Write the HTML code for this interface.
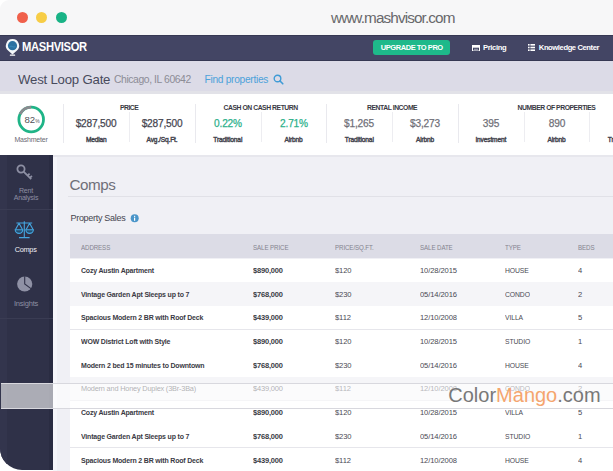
<!DOCTYPE html>
<html><head><meta charset="utf-8"><style>
html,body{margin:0;padding:0;}
body{width:613px;height:471px;position:relative;overflow:hidden;background:#ffffff;font-family:"Liberation Sans",sans-serif;}
</style></head><body>
<div style="position:absolute;left:0px;top:0px;width:613px;height:35px;background:#f7f7f8;border-top-left-radius:9px;"></div>
<div style="position:absolute;left:16.6px;top:11.6px;width:11.2px;height:11.2px;border-radius:50%;background:#f0604b"></div>
<div style="position:absolute;left:35.9px;top:11.6px;width:11.2px;height:11.2px;border-radius:50%;background:#f7cd46"></div>
<div style="position:absolute;left:55.8px;top:11.6px;width:11.2px;height:11.2px;border-radius:50%;background:#19b386"></div>
<div style="position:absolute;left:331px;top:9.75px;font-size:15.3px;line-height:15.3px;height:15.3px;font-weight:normal;color:#68686b;letter-spacing:-0.88px;white-space:nowrap;font-family:'Liberation Sans', sans-serif;">www.mashvisor.com</div>
<div style="position:absolute;left:0px;top:35px;width:613px;height:26px;background:#434564;"></div>
<div style="position:absolute;left:0px;top:35px;width:613px;height:1.2px;background:#363853;"></div>
<div style="position:absolute;left:0px;top:59.6px;width:613px;height:1.4px;background:#363853;"></div>
<svg style="position:absolute;left:0;top:35px" width="22" height="25" viewBox="0 35 22 25">
<path d="M12.5 39.1a6.6 6.6 0 0 0-4.2 11.7l4.2 3.7l4.2-3.7a6.6 6.6 0 0 0-4.2-11.7z" fill="#f4f8fa"/>
<circle cx="12.5" cy="45.7" r="4.6" fill="#2b72a2"/>
<path d="M9.6 46.6q1.5-1 2.9 0t2.9 0" stroke="#3d8fbf" stroke-width="0.8" fill="none"/>
<rect x="9.8" y="54.4" width="5.4" height="1.4" rx="0.6" fill="#fff"/>
</svg>
<div style="position:absolute;left:22.4px;top:40.17px;font-size:13.5px;line-height:13.5px;height:13.5px;font-weight:bold;color:#fff;letter-spacing:-0.4px;white-space:nowrap;font-family:'Liberation Sans', sans-serif;transform:scaleX(0.83);transform-origin:left 0;">MASHVISOR</div>
<div style="position:absolute;left:373px;top:40px;width:77px;height:15px;border-radius:3px;background:#1eb98a"></div>
<div style="position:absolute;left:211.8px;width:400px;top:44.15px;font-size:7.5px;line-height:7.5px;height:7.5px;font-weight:bold;color:#fff;letter-spacing:-0.45px;white-space:nowrap;font-family:'Liberation Sans', sans-serif;text-align:center;">UPGRADE TO PRO</div>
<svg style="position:absolute;left:472px;top:44.5px" width="8" height="6.5" viewBox="0 0 8 6.5">
<rect x="0.5" y="0.5" width="7" height="5.5" fill="none" stroke="#fff" stroke-width="1"/>
<rect x="0.5" y="0.5" width="7" height="2.2" fill="#fff"/>
<rect x="2" y="3.8" width="4" height="0.9" fill="#fff" fill-opacity="0.6"/>
</svg>
<div style="position:absolute;left:483px;top:43.87px;font-size:7.6px;line-height:7.6px;height:7.6px;font-weight:bold;color:#fff;letter-spacing:-0.35px;white-space:nowrap;font-family:'Liberation Sans', sans-serif;">Pricing</div>
<svg style="position:absolute;left:528px;top:44px" width="7" height="7" viewBox="0 0 7 7" fill="#fff">
<rect x="0" y="0" width="1.6" height="1.6"/><rect x="2.4" y="0" width="4.6" height="1.6"/>
<rect x="0" y="2.7" width="1.6" height="1.6"/><rect x="2.4" y="2.7" width="4.6" height="1.6"/>
<rect x="0" y="5.4" width="1.6" height="1.6"/><rect x="2.4" y="5.4" width="4.6" height="1.6"/>
</svg>
<div style="position:absolute;left:538.8px;top:43.87px;font-size:7.6px;line-height:7.6px;height:7.6px;font-weight:bold;color:#fff;letter-spacing:-0.4px;white-space:nowrap;font-family:'Liberation Sans', sans-serif;">Knowledge Center</div>
<div style="position:absolute;left:0px;top:61px;width:613px;height:30.2px;background:#dcdbe7;"></div>
<div style="position:absolute;left:0px;top:91.2px;width:613px;height:2.5px;background:#e2e2e8;"></div>
<div style="position:absolute;left:18px;top:72.83px;font-size:13.2px;line-height:13.2px;height:13.2px;font-weight:normal;color:#474a5c;letter-spacing:-0.2px;white-space:nowrap;font-family:'Liberation Sans', sans-serif;">West Loop Gate</div>
<div style="position:absolute;left:114px;top:75.20px;font-size:10.4px;line-height:10.4px;height:10.4px;font-weight:normal;color:#8c8c96;letter-spacing:-0.42px;white-space:nowrap;font-family:'Liberation Sans', sans-serif;">Chicago, IL 60642</div>
<div style="position:absolute;left:204.6px;top:75.37px;font-size:10.2px;line-height:10.2px;height:10.2px;font-weight:normal;color:#4ca2da;letter-spacing:-0.3px;white-space:nowrap;font-family:'Liberation Sans', sans-serif;">Find properties</div>
<svg style="position:absolute;left:273px;top:74px" width="11" height="11" viewBox="0 0 11 11">
<circle cx="4.5" cy="4.5" r="3.3" fill="none" stroke="#3f9bd6" stroke-width="1.4"/>
<path d="M7 7l2.8 2.8" stroke="#3f9bd6" stroke-width="1.6" stroke-linecap="round"/>
</svg>
<div style="position:absolute;left:0px;top:93.7px;width:613px;height:61.6px;background:#ffffff;"></div>
<svg style="position:absolute;left:16px;top:104px" width="31" height="31" viewBox="0 0 31 31">
<circle cx="15.2" cy="15.5" r="12.3" fill="none" stroke="#1fb487" stroke-width="2.8"/>
<path d="M15.2 3.2 A12.3 12.3 0 0 0 4.1 10.2" fill="none" stroke="#8a8a8f" stroke-width="2.8"/>
</svg>
<div style="position:absolute;left:24.6px;top:115.47px;font-size:9.6px;line-height:9.6px;height:9.6px;font-weight:normal;color:#4f4f56;letter-spacing:-0.3px;white-space:nowrap;font-family:'Liberation Sans', sans-serif;">82</div>
<div style="position:absolute;left:35.2px;top:119.37px;font-size:5px;line-height:5px;height:5px;font-weight:normal;color:#55555c;letter-spacing:0px;white-space:nowrap;font-family:'Liberation Sans', sans-serif;">%</div>
<div style="position:absolute;left:-169px;width:400px;top:135.67px;font-size:7px;line-height:7px;height:7px;font-weight:normal;color:#6b6b74;letter-spacing:-0.2px;white-space:nowrap;font-family:'Liberation Sans', sans-serif;text-align:center;">Mashmeter</div>
<div style="position:absolute;left:63.4px;top:103.7px;width:1px;height:39px;background:#e9e9ee;"></div>
<div style="position:absolute;left:129.2px;top:112px;width:1px;height:30px;background:#ededf1;"></div>
<div style="position:absolute;left:194.9px;top:103.7px;width:1px;height:39px;background:#e9e9ee;"></div>
<div style="position:absolute;left:260.6px;top:112px;width:1px;height:30px;background:#ededf1;"></div>
<div style="position:absolute;left:326.4px;top:103.7px;width:1px;height:39px;background:#e9e9ee;"></div>
<div style="position:absolute;left:392.1px;top:112px;width:1px;height:30px;background:#ededf1;"></div>
<div style="position:absolute;left:457.9px;top:103.7px;width:1px;height:39px;background:#e9e9ee;"></div>
<div style="position:absolute;left:523.6px;top:112px;width:1px;height:30px;background:#ededf1;"></div>
<div style="position:absolute;left:589.4px;top:112px;width:1px;height:30px;background:#ededf1;"></div>
<div style="position:absolute;left:-70.85px;width:400px;top:104.74px;font-size:6.8px;line-height:6.8px;height:6.8px;font-weight:bold;color:#3a3a44;letter-spacing:-0.45px;white-space:nowrap;font-family:'Liberation Sans', sans-serif;text-align:center;">PRICE</div>
<div style="position:absolute;left:60.64999999999998px;width:400px;top:104.74px;font-size:6.8px;line-height:6.8px;height:6.8px;font-weight:bold;color:#3a3a44;letter-spacing:-0.45px;white-space:nowrap;font-family:'Liberation Sans', sans-serif;text-align:center;">CASH ON CASH RETURN</div>
<div style="position:absolute;left:192.14999999999998px;width:400px;top:104.74px;font-size:6.8px;line-height:6.8px;height:6.8px;font-weight:bold;color:#3a3a44;letter-spacing:-0.45px;white-space:nowrap;font-family:'Liberation Sans', sans-serif;text-align:center;">RENTAL INCOME</div>
<div style="position:absolute;left:356.525px;width:400px;top:104.74px;font-size:6.8px;line-height:6.8px;height:6.8px;font-weight:bold;color:#3a3a44;letter-spacing:-0.45px;white-space:nowrap;font-family:'Liberation Sans', sans-serif;text-align:center;">NUMBER OF PROPERTIES</div>
<div style="position:absolute;left:-103.725px;width:400px;top:118.39px;font-size:11px;line-height:11px;height:11px;font-weight:normal;color:#45454f;letter-spacing:-0.2px;white-space:nowrap;font-family:'Liberation Sans', sans-serif;text-align:center;transform:scaleX(0.92);transform-origin:center 0;-webkit-text-stroke:0.25px #45454f;">$287,500</div>
<div style="position:absolute;left:-103.725px;width:400px;top:136.51px;font-size:6.6px;line-height:6.6px;height:6.6px;font-weight:normal;color:#44444e;letter-spacing:-0.15px;white-space:nowrap;font-family:'Liberation Sans', sans-serif;text-align:center;-webkit-text-stroke:0.4px #44444e;">Median</div>
<div style="position:absolute;left:-37.974999999999994px;width:400px;top:118.39px;font-size:11px;line-height:11px;height:11px;font-weight:normal;color:#45454f;letter-spacing:-0.2px;white-space:nowrap;font-family:'Liberation Sans', sans-serif;text-align:center;transform:scaleX(0.92);transform-origin:center 0;-webkit-text-stroke:0.25px #45454f;">$287,500</div>
<div style="position:absolute;left:-37.974999999999994px;width:400px;top:136.51px;font-size:6.6px;line-height:6.6px;height:6.6px;font-weight:normal;color:#44444e;letter-spacing:-0.15px;white-space:nowrap;font-family:'Liberation Sans', sans-serif;text-align:center;-webkit-text-stroke:0.4px #44444e;">Avg./Sq.Ft.</div>
<div style="position:absolute;left:27.775000000000006px;width:400px;top:118.39px;font-size:11px;line-height:11px;height:11px;font-weight:normal;color:#2bb08a;letter-spacing:-0.2px;white-space:nowrap;font-family:'Liberation Sans', sans-serif;text-align:center;transform:scaleX(0.92);transform-origin:center 0;-webkit-text-stroke:0.25px #2bb08a;">0.22%</div>
<div style="position:absolute;left:27.775000000000006px;width:400px;top:136.51px;font-size:6.6px;line-height:6.6px;height:6.6px;font-weight:normal;color:#44444e;letter-spacing:-0.15px;white-space:nowrap;font-family:'Liberation Sans', sans-serif;text-align:center;-webkit-text-stroke:0.4px #44444e;">Traditional</div>
<div style="position:absolute;left:93.52499999999998px;width:400px;top:118.39px;font-size:11px;line-height:11px;height:11px;font-weight:normal;color:#2bb08a;letter-spacing:-0.2px;white-space:nowrap;font-family:'Liberation Sans', sans-serif;text-align:center;transform:scaleX(0.92);transform-origin:center 0;-webkit-text-stroke:0.25px #2bb08a;">2.71%</div>
<div style="position:absolute;left:93.52499999999998px;width:400px;top:136.51px;font-size:6.6px;line-height:6.6px;height:6.6px;font-weight:normal;color:#44444e;letter-spacing:-0.15px;white-space:nowrap;font-family:'Liberation Sans', sans-serif;text-align:center;-webkit-text-stroke:0.4px #44444e;">Airbnb</div>
<div style="position:absolute;left:159.27499999999998px;width:400px;top:118.39px;font-size:11px;line-height:11px;height:11px;font-weight:normal;color:#6f6f78;letter-spacing:-0.2px;white-space:nowrap;font-family:'Liberation Sans', sans-serif;text-align:center;transform:scaleX(0.92);transform-origin:center 0;-webkit-text-stroke:0.25px #6f6f78;">$1,265</div>
<div style="position:absolute;left:159.27499999999998px;width:400px;top:136.51px;font-size:6.6px;line-height:6.6px;height:6.6px;font-weight:normal;color:#44444e;letter-spacing:-0.15px;white-space:nowrap;font-family:'Liberation Sans', sans-serif;text-align:center;-webkit-text-stroke:0.4px #44444e;">Traditional</div>
<div style="position:absolute;left:225.02499999999998px;width:400px;top:118.39px;font-size:11px;line-height:11px;height:11px;font-weight:normal;color:#6f6f78;letter-spacing:-0.2px;white-space:nowrap;font-family:'Liberation Sans', sans-serif;text-align:center;transform:scaleX(0.92);transform-origin:center 0;-webkit-text-stroke:0.25px #6f6f78;">$3,273</div>
<div style="position:absolute;left:225.02499999999998px;width:400px;top:136.51px;font-size:6.6px;line-height:6.6px;height:6.6px;font-weight:normal;color:#44444e;letter-spacing:-0.15px;white-space:nowrap;font-family:'Liberation Sans', sans-serif;text-align:center;-webkit-text-stroke:0.4px #44444e;">Airbnb</div>
<div style="position:absolute;left:290.775px;width:400px;top:118.39px;font-size:11px;line-height:11px;height:11px;font-weight:normal;color:#6f6f78;letter-spacing:-0.2px;white-space:nowrap;font-family:'Liberation Sans', sans-serif;text-align:center;transform:scaleX(0.92);transform-origin:center 0;-webkit-text-stroke:0.25px #6f6f78;">395</div>
<div style="position:absolute;left:290.775px;width:400px;top:136.51px;font-size:6.6px;line-height:6.6px;height:6.6px;font-weight:normal;color:#44444e;letter-spacing:-0.15px;white-space:nowrap;font-family:'Liberation Sans', sans-serif;text-align:center;-webkit-text-stroke:0.4px #44444e;">Investment</div>
<div style="position:absolute;left:356.525px;width:400px;top:118.39px;font-size:11px;line-height:11px;height:11px;font-weight:normal;color:#6f6f78;letter-spacing:-0.2px;white-space:nowrap;font-family:'Liberation Sans', sans-serif;text-align:center;transform:scaleX(0.92);transform-origin:center 0;-webkit-text-stroke:0.25px #6f6f78;">890</div>
<div style="position:absolute;left:356.525px;width:400px;top:136.51px;font-size:6.6px;line-height:6.6px;height:6.6px;font-weight:normal;color:#44444e;letter-spacing:-0.15px;white-space:nowrap;font-family:'Liberation Sans', sans-serif;text-align:center;-webkit-text-stroke:0.4px #44444e;">Airbnb</div>
<div style="position:absolute;left:422.275px;width:400px;top:136.51px;font-size:6.6px;line-height:6.6px;height:6.6px;font-weight:normal;color:#44444e;letter-spacing:-0.15px;white-space:nowrap;font-family:'Liberation Sans', sans-serif;text-align:center;-webkit-text-stroke:0.4px #44444e;">Traditional</div>
<div style="position:absolute;left:53px;top:155.3px;width:560px;height:315.7px;background:#f0f0f5;"></div>
<div style="position:absolute;left:53px;top:155.3px;width:560px;height:1.8px;background:#e7e7ed;"></div>
<div style="position:absolute;left:53px;top:157px;width:3.5px;height:314px;background:#f6f6fa;"></div>
<div style="position:absolute;left:0;top:155.3px;width:52.7px;height:314.7px;background:#2f3148;border-bottom-left-radius:22px;overflow:hidden"><div style="position:absolute;left:0;top:0;width:6.5px;height:100%;background:#33354d"></div><div style="position:absolute;left:49.3px;top:0;width:3.4px;height:100%;background:#2a2c42"></div></div>
<div style="position:absolute;left:0px;top:209.2px;width:52.7px;height:1px;background:#3a3c53;"></div>
<div style="position:absolute;left:0px;top:318px;width:52.7px;height:1px;background:#3a3c53;"></div>
<svg style="position:absolute;left:14px;top:162px" width="22" height="22" viewBox="0 0 22 22">
<circle cx="7" cy="7" r="3.6" fill="none" stroke="#8d8fa3" stroke-width="1.8"/>
<path d="M9.6 9.6l7.6 7.6M13.6 13.6l2-2M15.9 15.9l2-2" stroke="#8d8fa3" stroke-width="1.8"/>
</svg>
<div style="position:absolute;left:-174px;width:400px;top:186.57px;font-size:7px;line-height:7px;height:7px;font-weight:normal;color:#8d8fa3;letter-spacing:-0.2px;white-space:nowrap;font-family:'Liberation Sans', sans-serif;text-align:center;">Rent</div>
<div style="position:absolute;left:-174px;width:400px;top:193.57px;font-size:7px;line-height:7px;height:7px;font-weight:normal;color:#8d8fa3;letter-spacing:-0.2px;white-space:nowrap;font-family:'Liberation Sans', sans-serif;text-align:center;">Analysis</div>
<svg style="position:absolute;left:14px;top:220px" width="22" height="21" viewBox="0 0 22 21" fill="none" stroke="#45a6e0" stroke-width="1.1">
<path d="M10.3 1.2v16.3M5 17.6h10.6M2.4 3h15.8"/>
<path d="M5 3.2l-3.6 6.6M5 3.2l3.6 6.6M15.6 3.2l-3.6 6.6M15.6 3.2l3.6 6.6"/>
<path d="M1.2 9.8h7.6a3.8 3.6 0 0 1-7.6 0z M11.8 9.8h7.6a3.8 3.6 0 0 1-7.6 0z" fill="#234e70"/>
</svg>
<div style="position:absolute;left:-174.4px;width:400px;top:245.62px;font-size:7.3px;line-height:7.3px;height:7.3px;font-weight:normal;color:#f2f2f6;letter-spacing:-0.25px;white-space:nowrap;font-family:'Liberation Sans', sans-serif;text-align:center;">Comps</div>
<svg style="position:absolute;left:14px;top:274px" width="22" height="20" viewBox="0 0 22 20">
<circle cx="10.7" cy="10" r="7.6" fill="#8f91a5"/>
<path d="M10.7 2.2V10L17 14.6" fill="none" stroke="#2f3148" stroke-width="1.1"/>
</svg>
<div style="position:absolute;left:-174px;width:400px;top:299.65px;font-size:7.5px;line-height:7.5px;height:7.5px;font-weight:normal;color:#8d8fa3;letter-spacing:-0.2px;white-space:nowrap;font-family:'Liberation Sans', sans-serif;text-align:center;">Insights</div>
<div style="position:absolute;left:69.6px;top:176.93px;font-size:15.2px;line-height:15.2px;height:15.2px;font-weight:normal;color:#6f6f79;letter-spacing:-0.45px;white-space:nowrap;font-family:'Liberation Sans', sans-serif;">Comps</div>
<div style="position:absolute;left:67.5px;top:195.6px;width:545.5px;height:1.8px;background:#e1e1e7;"></div>
<div style="position:absolute;left:70.5px;top:213.68px;font-size:9px;line-height:9px;height:9px;font-weight:normal;color:#45454f;letter-spacing:-0.3px;white-space:nowrap;font-family:'Liberation Sans', sans-serif;">Property Sales</div>
<svg style="position:absolute;left:130px;top:214px" width="9" height="9" viewBox="0 0 9 9">
<circle cx="4.7" cy="4.3" r="4" fill="#4a95c9"/>
<rect x="4" y="3.6" width="1.2" height="3.2" fill="#fff"/><rect x="4" y="1.8" width="1.2" height="1.1" fill="#fff"/>
</svg>
<div style="position:absolute;left:69.6px;top:233.7px;width:543.4px;height:24.4px;background:#dcdce6;"></div>
<div style="position:absolute;left:81px;top:243.87px;font-size:7px;line-height:7px;height:7px;font-weight:normal;color:#84848f;letter-spacing:-0.1px;white-space:nowrap;font-family:'Liberation Sans', sans-serif;transform:scaleX(0.88);transform-origin:left 0;">ADDRESS</div>
<div style="position:absolute;left:253px;top:243.87px;font-size:7px;line-height:7px;height:7px;font-weight:normal;color:#84848f;letter-spacing:-0.1px;white-space:nowrap;font-family:'Liberation Sans', sans-serif;transform:scaleX(0.88);transform-origin:left 0;">SALE PRICE</div>
<div style="position:absolute;left:334.5px;top:243.87px;font-size:7px;line-height:7px;height:7px;font-weight:normal;color:#84848f;letter-spacing:-0.1px;white-space:nowrap;font-family:'Liberation Sans', sans-serif;transform:scaleX(0.88);transform-origin:left 0;">PRICE/SQ.FT.</div>
<div style="position:absolute;left:420px;top:243.87px;font-size:7px;line-height:7px;height:7px;font-weight:normal;color:#84848f;letter-spacing:-0.1px;white-space:nowrap;font-family:'Liberation Sans', sans-serif;transform:scaleX(0.88);transform-origin:left 0;">SALE DATE</div>
<div style="position:absolute;left:505px;top:243.87px;font-size:7px;line-height:7px;height:7px;font-weight:normal;color:#84848f;letter-spacing:-0.1px;white-space:nowrap;font-family:'Liberation Sans', sans-serif;transform:scaleX(0.88);transform-origin:left 0;">TYPE</div>
<div style="position:absolute;left:578px;top:243.87px;font-size:7px;line-height:7px;height:7px;font-weight:normal;color:#84848f;letter-spacing:-0.1px;white-space:nowrap;font-family:'Liberation Sans', sans-serif;transform:scaleX(0.88);transform-origin:left 0;">BEDS</div>
<div style="position:absolute;left:69.6px;top:258.5px;width:543.4px;height:23.7px;background:#ffffff;"></div>
<div style="position:absolute;left:81px;top:266.91px;font-size:7.9px;line-height:7.9px;height:7.9px;font-weight:bold;color:#3a3a44;letter-spacing:-0.2px;white-space:nowrap;font-family:'Liberation Sans', sans-serif;transform:scaleX(0.885);transform-origin:left 0;">Cozy Austin Apartment</div>
<div style="position:absolute;left:253px;top:266.91px;font-size:7.9px;line-height:7.9px;height:7.9px;font-weight:bold;color:#3a3a44;letter-spacing:-0.2px;white-space:nowrap;font-family:'Liberation Sans', sans-serif;transform:scaleX(0.95);transform-origin:left 0;">$890,000</div>
<div style="position:absolute;left:334.5px;top:266.91px;font-size:7.9px;line-height:7.9px;height:7.9px;font-weight:normal;color:#4a4a54;letter-spacing:-0.1px;white-space:nowrap;font-family:'Liberation Sans', sans-serif;transform:scaleX(0.96);transform-origin:left 0;">$120</div>
<div style="position:absolute;left:420px;top:266.91px;font-size:7.9px;line-height:7.9px;height:7.9px;font-weight:normal;color:#4a4a54;letter-spacing:-0.1px;white-space:nowrap;font-family:'Liberation Sans', sans-serif;transform:scaleX(0.96);transform-origin:left 0;">10/28/2015</div>
<div style="position:absolute;left:505px;top:266.91px;font-size:7.9px;line-height:7.9px;height:7.9px;font-weight:normal;color:#4a4a54;letter-spacing:-0.1px;white-space:nowrap;font-family:'Liberation Sans', sans-serif;transform:scaleX(0.86);transform-origin:left 0;">HOUSE</div>
<div style="position:absolute;left:578px;top:266.91px;font-size:7.9px;line-height:7.9px;height:7.9px;font-weight:normal;color:#4a4a54;letter-spacing:-0.1px;white-space:nowrap;font-family:'Liberation Sans', sans-serif;transform:scaleX(0.96);transform-origin:left 0;">4</div>
<div style="position:absolute;left:69.6px;top:282.2px;width:543.4px;height:23.7px;background:#f5f5f8;"></div>
<div style="position:absolute;left:81px;top:290.61px;font-size:7.9px;line-height:7.9px;height:7.9px;font-weight:bold;color:#3a3a44;letter-spacing:-0.2px;white-space:nowrap;font-family:'Liberation Sans', sans-serif;transform:scaleX(0.885);transform-origin:left 0;">Vintage Garden Apt Sleeps up to 7</div>
<div style="position:absolute;left:253px;top:290.61px;font-size:7.9px;line-height:7.9px;height:7.9px;font-weight:bold;color:#3a3a44;letter-spacing:-0.2px;white-space:nowrap;font-family:'Liberation Sans', sans-serif;transform:scaleX(0.95);transform-origin:left 0;">$768,000</div>
<div style="position:absolute;left:334.5px;top:290.61px;font-size:7.9px;line-height:7.9px;height:7.9px;font-weight:normal;color:#4a4a54;letter-spacing:-0.1px;white-space:nowrap;font-family:'Liberation Sans', sans-serif;transform:scaleX(0.96);transform-origin:left 0;">$230</div>
<div style="position:absolute;left:420px;top:290.61px;font-size:7.9px;line-height:7.9px;height:7.9px;font-weight:normal;color:#4a4a54;letter-spacing:-0.1px;white-space:nowrap;font-family:'Liberation Sans', sans-serif;transform:scaleX(0.96);transform-origin:left 0;">05/14/2016</div>
<div style="position:absolute;left:505px;top:290.61px;font-size:7.9px;line-height:7.9px;height:7.9px;font-weight:normal;color:#4a4a54;letter-spacing:-0.1px;white-space:nowrap;font-family:'Liberation Sans', sans-serif;transform:scaleX(0.86);transform-origin:left 0;">CONDO</div>
<div style="position:absolute;left:578px;top:290.61px;font-size:7.9px;line-height:7.9px;height:7.9px;font-weight:normal;color:#4a4a54;letter-spacing:-0.1px;white-space:nowrap;font-family:'Liberation Sans', sans-serif;transform:scaleX(0.96);transform-origin:left 0;">2</div>
<div style="position:absolute;left:69.6px;top:305.9px;width:543.4px;height:23.7px;background:#ffffff;"></div>
<div style="position:absolute;left:69.6px;top:328.8px;width:543.4px;height:1px;background:#e6e6eb;"></div>
<div style="position:absolute;left:81px;top:314.31px;font-size:7.9px;line-height:7.9px;height:7.9px;font-weight:bold;color:#3a3a44;letter-spacing:-0.2px;white-space:nowrap;font-family:'Liberation Sans', sans-serif;transform:scaleX(0.885);transform-origin:left 0;">Spacious Modern 2 BR with Roof Deck</div>
<div style="position:absolute;left:253px;top:314.31px;font-size:7.9px;line-height:7.9px;height:7.9px;font-weight:bold;color:#3a3a44;letter-spacing:-0.2px;white-space:nowrap;font-family:'Liberation Sans', sans-serif;transform:scaleX(0.95);transform-origin:left 0;">$439,000</div>
<div style="position:absolute;left:334.5px;top:314.31px;font-size:7.9px;line-height:7.9px;height:7.9px;font-weight:normal;color:#4a4a54;letter-spacing:-0.1px;white-space:nowrap;font-family:'Liberation Sans', sans-serif;transform:scaleX(0.96);transform-origin:left 0;">$112</div>
<div style="position:absolute;left:420px;top:314.31px;font-size:7.9px;line-height:7.9px;height:7.9px;font-weight:normal;color:#4a4a54;letter-spacing:-0.1px;white-space:nowrap;font-family:'Liberation Sans', sans-serif;transform:scaleX(0.96);transform-origin:left 0;">12/10/2008</div>
<div style="position:absolute;left:505px;top:314.31px;font-size:7.9px;line-height:7.9px;height:7.9px;font-weight:normal;color:#4a4a54;letter-spacing:-0.1px;white-space:nowrap;font-family:'Liberation Sans', sans-serif;transform:scaleX(0.86);transform-origin:left 0;">VILLA</div>
<div style="position:absolute;left:578px;top:314.31px;font-size:7.9px;line-height:7.9px;height:7.9px;font-weight:normal;color:#4a4a54;letter-spacing:-0.1px;white-space:nowrap;font-family:'Liberation Sans', sans-serif;transform:scaleX(0.96);transform-origin:left 0;">5</div>
<div style="position:absolute;left:69.6px;top:329.6px;width:543.4px;height:23.7px;background:#ffffff;"></div>
<div style="position:absolute;left:69.6px;top:352.5px;width:543.4px;height:1px;background:#e6e6eb;"></div>
<div style="position:absolute;left:81px;top:338.01px;font-size:7.9px;line-height:7.9px;height:7.9px;font-weight:bold;color:#3a3a44;letter-spacing:-0.2px;white-space:nowrap;font-family:'Liberation Sans', sans-serif;transform:scaleX(0.885);transform-origin:left 0;">WOW District Loft with Style</div>
<div style="position:absolute;left:253px;top:338.01px;font-size:7.9px;line-height:7.9px;height:7.9px;font-weight:bold;color:#3a3a44;letter-spacing:-0.2px;white-space:nowrap;font-family:'Liberation Sans', sans-serif;transform:scaleX(0.95);transform-origin:left 0;">$890,000</div>
<div style="position:absolute;left:334.5px;top:338.01px;font-size:7.9px;line-height:7.9px;height:7.9px;font-weight:normal;color:#4a4a54;letter-spacing:-0.1px;white-space:nowrap;font-family:'Liberation Sans', sans-serif;transform:scaleX(0.96);transform-origin:left 0;">$120</div>
<div style="position:absolute;left:420px;top:338.01px;font-size:7.9px;line-height:7.9px;height:7.9px;font-weight:normal;color:#4a4a54;letter-spacing:-0.1px;white-space:nowrap;font-family:'Liberation Sans', sans-serif;transform:scaleX(0.96);transform-origin:left 0;">10/28/2015</div>
<div style="position:absolute;left:505px;top:338.01px;font-size:7.9px;line-height:7.9px;height:7.9px;font-weight:normal;color:#4a4a54;letter-spacing:-0.1px;white-space:nowrap;font-family:'Liberation Sans', sans-serif;transform:scaleX(0.86);transform-origin:left 0;">STUDIO</div>
<div style="position:absolute;left:578px;top:338.01px;font-size:7.9px;line-height:7.9px;height:7.9px;font-weight:normal;color:#4a4a54;letter-spacing:-0.1px;white-space:nowrap;font-family:'Liberation Sans', sans-serif;transform:scaleX(0.96);transform-origin:left 0;">1</div>
<div style="position:absolute;left:69.6px;top:353.3px;width:543.4px;height:23.7px;background:#ffffff;"></div>
<div style="position:absolute;left:81px;top:361.71px;font-size:7.9px;line-height:7.9px;height:7.9px;font-weight:bold;color:#3a3a44;letter-spacing:-0.2px;white-space:nowrap;font-family:'Liberation Sans', sans-serif;transform:scaleX(0.885);transform-origin:left 0;">Modern 2 bed 15 minutes to Downtown</div>
<div style="position:absolute;left:253px;top:361.71px;font-size:7.9px;line-height:7.9px;height:7.9px;font-weight:bold;color:#3a3a44;letter-spacing:-0.2px;white-space:nowrap;font-family:'Liberation Sans', sans-serif;transform:scaleX(0.95);transform-origin:left 0;">$768,000</div>
<div style="position:absolute;left:334.5px;top:361.71px;font-size:7.9px;line-height:7.9px;height:7.9px;font-weight:normal;color:#4a4a54;letter-spacing:-0.1px;white-space:nowrap;font-family:'Liberation Sans', sans-serif;transform:scaleX(0.96);transform-origin:left 0;">$230</div>
<div style="position:absolute;left:420px;top:361.71px;font-size:7.9px;line-height:7.9px;height:7.9px;font-weight:normal;color:#4a4a54;letter-spacing:-0.1px;white-space:nowrap;font-family:'Liberation Sans', sans-serif;transform:scaleX(0.96);transform-origin:left 0;">05/14/2016</div>
<div style="position:absolute;left:505px;top:361.71px;font-size:7.9px;line-height:7.9px;height:7.9px;font-weight:normal;color:#4a4a54;letter-spacing:-0.1px;white-space:nowrap;font-family:'Liberation Sans', sans-serif;transform:scaleX(0.86);transform-origin:left 0;">HOUSE</div>
<div style="position:absolute;left:578px;top:361.71px;font-size:7.9px;line-height:7.9px;height:7.9px;font-weight:normal;color:#4a4a54;letter-spacing:-0.1px;white-space:nowrap;font-family:'Liberation Sans', sans-serif;transform:scaleX(0.96);transform-origin:left 0;">4</div>
<div style="position:absolute;left:69.6px;top:377.0px;width:543.4px;height:23.7px;background:#f5f5f8;"></div>
<div style="position:absolute;left:69.6px;top:399.9px;width:543.4px;height:1px;background:#e6e6eb;"></div>
<div style="position:absolute;left:81px;top:385.41px;font-size:7.9px;line-height:7.9px;height:7.9px;font-weight:normal;color:#3a3a44;letter-spacing:-0.2px;white-space:nowrap;font-family:'Liberation Sans', sans-serif;transform:scaleX(0.93);transform-origin:left 0;">Modern and Honey Duplex (3Br-3Ba)</div>
<div style="position:absolute;left:253px;top:385.41px;font-size:7.9px;line-height:7.9px;height:7.9px;font-weight:normal;color:#3a3a44;letter-spacing:-0.2px;white-space:nowrap;font-family:'Liberation Sans', sans-serif;transform:scaleX(0.95);transform-origin:left 0;">$439,000</div>
<div style="position:absolute;left:334.5px;top:385.41px;font-size:7.9px;line-height:7.9px;height:7.9px;font-weight:normal;color:#4a4a54;letter-spacing:-0.1px;white-space:nowrap;font-family:'Liberation Sans', sans-serif;transform:scaleX(0.96);transform-origin:left 0;">$112</div>
<div style="position:absolute;left:420px;top:385.41px;font-size:7.9px;line-height:7.9px;height:7.9px;font-weight:normal;color:#4a4a54;letter-spacing:-0.1px;white-space:nowrap;font-family:'Liberation Sans', sans-serif;transform:scaleX(0.96);transform-origin:left 0;">12/10/2008</div>
<div style="position:absolute;left:505px;top:385.41px;font-size:7.9px;line-height:7.9px;height:7.9px;font-weight:normal;color:#4a4a54;letter-spacing:-0.1px;white-space:nowrap;font-family:'Liberation Sans', sans-serif;transform:scaleX(0.86);transform-origin:left 0;">CONDO</div>
<div style="position:absolute;left:578px;top:385.41px;font-size:7.9px;line-height:7.9px;height:7.9px;font-weight:normal;color:#4a4a54;letter-spacing:-0.1px;white-space:nowrap;font-family:'Liberation Sans', sans-serif;transform:scaleX(0.96);transform-origin:left 0;">2</div>
<div style="position:absolute;left:69.6px;top:400.7px;width:543.4px;height:23.7px;background:#ffffff;"></div>
<div style="position:absolute;left:69.6px;top:423.6px;width:543.4px;height:1px;background:#e6e6eb;"></div>
<div style="position:absolute;left:81px;top:409.11px;font-size:7.9px;line-height:7.9px;height:7.9px;font-weight:bold;color:#3a3a44;letter-spacing:-0.2px;white-space:nowrap;font-family:'Liberation Sans', sans-serif;transform:scaleX(0.885);transform-origin:left 0;">Cozy Austin Apartment</div>
<div style="position:absolute;left:253px;top:409.11px;font-size:7.9px;line-height:7.9px;height:7.9px;font-weight:bold;color:#3a3a44;letter-spacing:-0.2px;white-space:nowrap;font-family:'Liberation Sans', sans-serif;transform:scaleX(0.95);transform-origin:left 0;">$890,000</div>
<div style="position:absolute;left:334.5px;top:409.11px;font-size:7.9px;line-height:7.9px;height:7.9px;font-weight:normal;color:#4a4a54;letter-spacing:-0.1px;white-space:nowrap;font-family:'Liberation Sans', sans-serif;transform:scaleX(0.96);transform-origin:left 0;">$120</div>
<div style="position:absolute;left:420px;top:409.11px;font-size:7.9px;line-height:7.9px;height:7.9px;font-weight:normal;color:#4a4a54;letter-spacing:-0.1px;white-space:nowrap;font-family:'Liberation Sans', sans-serif;transform:scaleX(0.96);transform-origin:left 0;">10/28/2015</div>
<div style="position:absolute;left:505px;top:409.11px;font-size:7.9px;line-height:7.9px;height:7.9px;font-weight:normal;color:#4a4a54;letter-spacing:-0.1px;white-space:nowrap;font-family:'Liberation Sans', sans-serif;transform:scaleX(0.86);transform-origin:left 0;">VILLA</div>
<div style="position:absolute;left:578px;top:409.11px;font-size:7.9px;line-height:7.9px;height:7.9px;font-weight:normal;color:#4a4a54;letter-spacing:-0.1px;white-space:nowrap;font-family:'Liberation Sans', sans-serif;transform:scaleX(0.96);transform-origin:left 0;">5</div>
<div style="position:absolute;left:69.6px;top:424.4px;width:543.4px;height:23.7px;background:#ffffff;"></div>
<div style="position:absolute;left:69.6px;top:447.3px;width:543.4px;height:1px;background:#e6e6eb;"></div>
<div style="position:absolute;left:81px;top:432.81px;font-size:7.9px;line-height:7.9px;height:7.9px;font-weight:bold;color:#3a3a44;letter-spacing:-0.2px;white-space:nowrap;font-family:'Liberation Sans', sans-serif;transform:scaleX(0.885);transform-origin:left 0;">Vintage Garden Apt Sleeps up to 7</div>
<div style="position:absolute;left:253px;top:432.81px;font-size:7.9px;line-height:7.9px;height:7.9px;font-weight:bold;color:#3a3a44;letter-spacing:-0.2px;white-space:nowrap;font-family:'Liberation Sans', sans-serif;transform:scaleX(0.95);transform-origin:left 0;">$768,000</div>
<div style="position:absolute;left:334.5px;top:432.81px;font-size:7.9px;line-height:7.9px;height:7.9px;font-weight:normal;color:#4a4a54;letter-spacing:-0.1px;white-space:nowrap;font-family:'Liberation Sans', sans-serif;transform:scaleX(0.96);transform-origin:left 0;">$230</div>
<div style="position:absolute;left:420px;top:432.81px;font-size:7.9px;line-height:7.9px;height:7.9px;font-weight:normal;color:#4a4a54;letter-spacing:-0.1px;white-space:nowrap;font-family:'Liberation Sans', sans-serif;transform:scaleX(0.96);transform-origin:left 0;">05/14/2016</div>
<div style="position:absolute;left:505px;top:432.81px;font-size:7.9px;line-height:7.9px;height:7.9px;font-weight:normal;color:#4a4a54;letter-spacing:-0.1px;white-space:nowrap;font-family:'Liberation Sans', sans-serif;transform:scaleX(0.86);transform-origin:left 0;">STUDIO</div>
<div style="position:absolute;left:578px;top:432.81px;font-size:7.9px;line-height:7.9px;height:7.9px;font-weight:normal;color:#4a4a54;letter-spacing:-0.1px;white-space:nowrap;font-family:'Liberation Sans', sans-serif;transform:scaleX(0.96);transform-origin:left 0;">1</div>
<div style="position:absolute;left:69.6px;top:448.1px;width:543.4px;height:23.7px;background:#ffffff;"></div>
<div style="position:absolute;left:81px;top:456.51px;font-size:7.9px;line-height:7.9px;height:7.9px;font-weight:bold;color:#3a3a44;letter-spacing:-0.2px;white-space:nowrap;font-family:'Liberation Sans', sans-serif;transform:scaleX(0.885);transform-origin:left 0;">Spacious Modern 2 BR with Roof Deck</div>
<div style="position:absolute;left:253px;top:456.51px;font-size:7.9px;line-height:7.9px;height:7.9px;font-weight:bold;color:#3a3a44;letter-spacing:-0.2px;white-space:nowrap;font-family:'Liberation Sans', sans-serif;transform:scaleX(0.95);transform-origin:left 0;">$439,000</div>
<div style="position:absolute;left:334.5px;top:456.51px;font-size:7.9px;line-height:7.9px;height:7.9px;font-weight:normal;color:#4a4a54;letter-spacing:-0.1px;white-space:nowrap;font-family:'Liberation Sans', sans-serif;transform:scaleX(0.96);transform-origin:left 0;">$112</div>
<div style="position:absolute;left:420px;top:456.51px;font-size:7.9px;line-height:7.9px;height:7.9px;font-weight:normal;color:#4a4a54;letter-spacing:-0.1px;white-space:nowrap;font-family:'Liberation Sans', sans-serif;transform:scaleX(0.96);transform-origin:left 0;">12/10/2008</div>
<div style="position:absolute;left:505px;top:456.51px;font-size:7.9px;line-height:7.9px;height:7.9px;font-weight:normal;color:#4a4a54;letter-spacing:-0.1px;white-space:nowrap;font-family:'Liberation Sans', sans-serif;transform:scaleX(0.86);transform-origin:left 0;">HOUSE</div>
<div style="position:absolute;left:578px;top:456.51px;font-size:7.9px;line-height:7.9px;height:7.9px;font-weight:normal;color:#4a4a54;letter-spacing:-0.1px;white-space:nowrap;font-family:'Liberation Sans', sans-serif;transform:scaleX(0.96);transform-origin:left 0;">4</div>
<div style="position:absolute;left:1px;top:383.2px;width:612px;height:25.6px;background:rgba(255,255,255,0.6);border-top:1px solid #d8d8de;border-bottom:1px solid #d8d8de;box-sizing:border-box"></div>
<div style="position:absolute;left:448.3px;top:385.27px;font-size:20px;line-height:20px;white-space:nowrap;font-family:'Liberation Sans',sans-serif;color:#787878">Color<span style="color:#f5a56e">Mango</span>.com</div>
</body></html>
